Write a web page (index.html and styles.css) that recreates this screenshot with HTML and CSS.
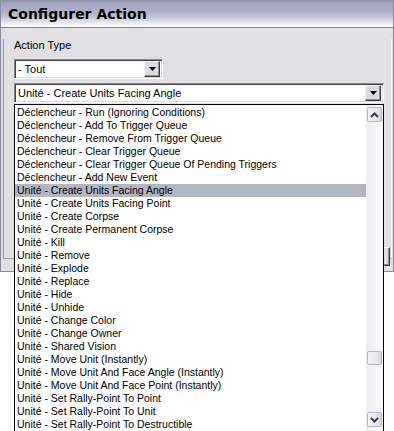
FILE: index.html
```html
<!DOCTYPE html>
<html lang="fr">
<head>
    <meta charset="UTF-8">
    <meta name="viewport" content="width=device-width, initial-scale=1.0">
    <title>Configurer Action</title>
    <link rel="stylesheet" href="styles.css">
</head>
<body>
    <div class="screen">
        <div class="window">
            <div class="titlebar">Configurer Action</div>
            <div class="client">
                <div class="panel">
                    <div class="label">Action Type</div>
                    <div class="combo combo-small">
                        <span class="combo-text">- Tout</span>
                        <span class="combo-btn"><svg width="7" height="4" viewBox="0 0 7 4"><path d="M0 0h7L3.5 4z" fill="#000"/></svg></span>
                    </div>
                    <div class="combo combo-wide">
                        <span class="combo-text">Unité - Create Units Facing Angle</span>
                        <span class="combo-btn"><svg width="7" height="4" viewBox="0 0 7 4"><path d="M0 0h7L3.5 4z" fill="#000"/></svg></span>
                    </div>
                </div>
                <div class="footer">
                    <div class="button"></div>
                </div>
            </div>
        </div>

        <!-- open dropdown of the second combo -->
        <div class="droplist">
            <ul class="items">
                <li>Déclencheur - Run (Ignoring Conditions)</li>
                <li>Déclencheur - Add To Trigger Queue</li>
                <li>Déclencheur - Remove From Trigger Queue</li>
                <li>Déclencheur - Clear Trigger Queue</li>
                <li>Déclencheur - Clear Trigger Queue Of Pending Triggers</li>
                <li>Déclencheur - Add New Event</li>
                <li class="selected">Unité - Create Units Facing Angle</li>
                <li>Unité - Create Units Facing Point</li>
                <li>Unité - Create Corpse</li>
                <li>Unité - Create Permanent Corpse</li>
                <li>Unité - Kill</li>
                <li>Unité - Remove</li>
                <li>Unité - Explode</li>
                <li>Unité - Replace</li>
                <li>Unité - Hide</li>
                <li>Unité - Unhide</li>
                <li>Unité - Change Color</li>
                <li>Unité - Change Owner</li>
                <li>Unité - Shared Vision</li>
                <li>Unité - Move Unit (Instantly)</li>
                <li>Unité - Move Unit And Face Angle (Instantly)</li>
                <li>Unité - Move Unit And Face Point (Instantly)</li>
                <li>Unité - Set Rally-Point To Point</li>
                <li>Unité - Set Rally-Point To Unit</li>
                <li>Unité - Set Rally-Point To Destructible</li>
            </ul>
            <div class="scrollbar">
                <div class="sb-btn"><svg width="9" height="6" viewBox="0 0 9 6"><path d="M1 5L4.5 1.5L8 5" fill="none" stroke="#3c3c50" stroke-width="2"/></svg></div>
                <div class="sb-track sb-track-top"></div>
                <div class="sb-thumb"></div>
                <div class="sb-track sb-track-bottom"></div>
                <div class="sb-btn"><svg width="9" height="6" viewBox="0 0 9 6"><path d="M1 1L4.5 4.5L8 1" fill="none" stroke="#3c3c50" stroke-width="2"/></svg></div>
            </div>
        </div>
    </div>
</body>
</html>
```

FILE: styles.css
```css
body {
    margin: 0;
    background: #fff;
    font-family: "Liberation Sans", Arial, sans-serif;
    font-size: 10.5px;
    color: #000;
}
.screen {
    position: relative;
    width: 394px;
    height: 431px;
    overflow: hidden;
}
.window {
    width: 394px;
}
.titlebar {
    height: 28px;
    box-sizing: border-box;
    padding: 6px 0 0 7px;
    font-family: "DejaVu Sans", sans-serif;
    font-weight: bold;
    font-size: 14px;
    line-height: 16px;
    background: linear-gradient(#8b8ca5 0, #a4a5bf 3px, #abacc5 10px, #c2c3d6 17px, #e9e9f1 23px, #fff 27px);
    border-left: 1px solid #8a8aa2;
    border-right: 1px solid #8a8aa2;
    border-bottom: 1px solid #80809a;
}
.client {
    background: #e0dfe3;
    border-left: 1px solid #8a8aa2;
    border-right: 1px solid #8a8aa2;
    border-bottom: 1px solid #8a8aa8;
    padding: 1px 1px 5px 2px;
}
.panel {
    height: 219px;
    padding: 0 10px;
    border-left: 1px solid #9c9cb0;
    border-right: 1px solid #f4f4f8;
    border-bottom: 1px solid #9c9cb0;
}
.label {
    margin-top: 10px;
    line-height: 13px;
    font-size: 11px;
}
.combo {
    display: flex;
    align-items: center;
    height: 20px;
    box-sizing: border-box;
    background: #fff;
    border-top: 1px solid #8a8a96;
    border-left: 1px solid #8a8a96;
    border-bottom: 1px solid #fff;
    border-right: 1px solid #fff;
    box-shadow: inset 1px 1px 0 #404040, inset -1px -1px 0 #d8d8de;
    padding: 2px 2px 2px 3px;
}
.combo-small {
    width: 149px;
    margin-top: 7px;
}
.combo-wide {
    width: 370px;
    margin-top: 4px;
}
.combo-text {
    flex: 1;
    line-height: 14px;
    font-size: 11px;
}
.combo-btn {
    display: flex;
    align-items: center;
    justify-content: center;
    width: 16px;
    height: 16px;
    box-sizing: border-box;
    background: #dcdbe2;
    border-top: 1px solid #f2f2f6;
    border-left: 1px solid #f2f2f6;
    border-right: 1px solid #404040;
    border-bottom: 1px solid #404040;
    box-shadow: inset -1px -1px 0 #8e8e9c;
}
.footer {
    display: flex;
    justify-content: flex-end;
    margin-top: -12px;
    padding-right: 2px;
}
.button {
    width: 75px;
    height: 19px;
    box-sizing: border-box;
    background: #e0dfe3;
    border-top: 1px solid #fff;
    border-left: 1px solid #fff;
    border-right: 1px solid #404040;
    border-bottom: 1px solid #404040;
    box-shadow: inset -1px -1px 0 #8e8e9c;
}
.droplist {
    position: absolute;
    left: 14px;
    top: 104px;
    width: 370px;
    height: 340px;
    box-sizing: border-box;
    display: flex;
    background: #fff;
    border: 1px solid #000;
}
.items {
    flex: 1;
    list-style: none;
    margin: 0;
    padding: 1px 0 0 0;
}
.items li {
    height: 13px;
    line-height: 13px;
    padding-left: 2px;
    white-space: nowrap;
    overflow: hidden;
}
.items li.selected {
    background: #b3b5c2;
}
.scrollbar {
    width: 17px;
    display: flex;
    flex-direction: column;
    align-items: center;
    padding-top: 2px;
    background: linear-gradient(to right, #ececf2, #f6f6f9 60%, #fbfbfc);
}
.sb-btn, .sb-thumb {
    width: 15px;
    box-sizing: border-box;
    border: 1px solid #b6b6c6;
    border-radius: 2px;
    background: linear-gradient(to right, #f6f6f9, #e4e4ec 70%, #d6d6e0);
}
.sb-btn {
    height: 15px;
    display: flex;
    align-items: center;
    justify-content: center;
}
.sb-track-top {
    height: 229px;
}
.sb-thumb {
    height: 14px;
}
.sb-track-bottom {
    height: 47px;
}
```
